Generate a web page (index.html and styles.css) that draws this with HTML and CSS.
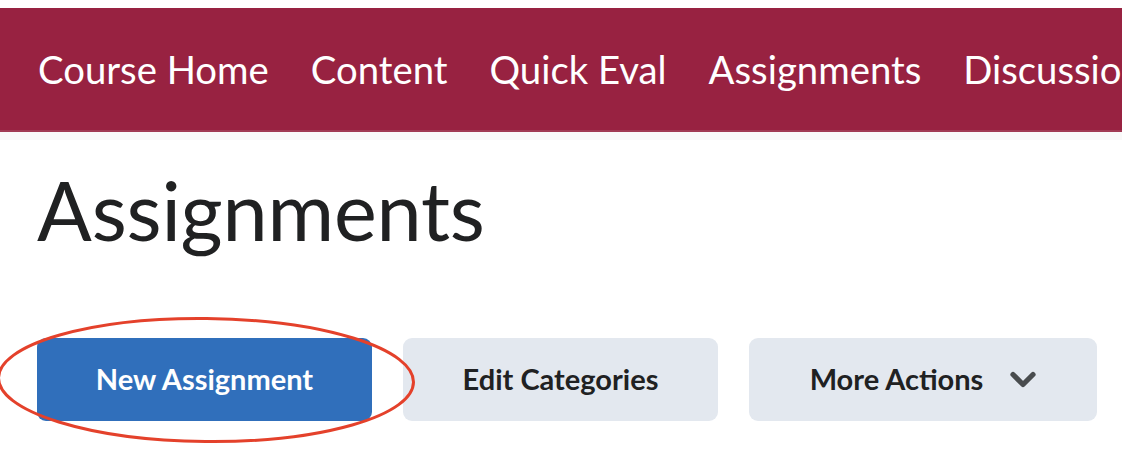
FILE: index.html
```html
<!DOCTYPE html>
<html lang="en">
<head>
<meta charset="utf-8">
<title>Assignments</title>
<link rel="stylesheet" href="styles.css">
</head>
<body>
<nav class="navbar">
  <a class="nav-link">Course Home</a>
  <a class="nav-link">Content</a>
  <a class="nav-link">Quick Eval</a>
  <a class="nav-link">Assignments</a>
  <a class="nav-link">Discussions</a>
</nav>
<div class="strip"></div>
<main class="page">
  <h1 class="title">Assignments</h1>
  <div class="actions">
    <div class="highlight-wrap">
      <button class="btn btn-primary">New Assignment</button>
      <svg class="ring" width="424" height="132" viewBox="0 0 424 132" aria-hidden="true">
        <ellipse cx="212" cy="66" rx="207.5" ry="61.5" fill="none" stroke="#e4412b" stroke-width="3" transform="rotate(0.6 212 66)"/>
      </svg>
    </div>
    <button class="btn btn-secondary">Edit Categories</button>
    <button class="btn btn-secondary btn-more">More Actions
      <svg class="chev" width="26" height="18" viewBox="0 0 26 18" aria-hidden="true">
        <path d="M3 3.5 L13 13.5 L23 3.5" fill="none" stroke="#494c4e" stroke-width="5.2" stroke-linecap="round" stroke-linejoin="round"/>
      </svg>
    </button>
  </div>
</main>
</body>
</html>
```
FILE: styles.css
```css
html, body {
  margin: 0;
  padding: 0;
  background: #ffffff;
  overflow: hidden;
}
body {
  font-family: Lato, "Open Sans", "Liberation Sans", sans-serif;
  padding-top: 8px;
  width: 1122px;
  height: 452px;
  box-sizing: border-box;
}
.navbar {
  display: flex;
  align-items: center;
  gap: 42px;
  height: 122px;
  padding-left: 38px;
  background: #982241;
  border-bottom: 2px solid #a13a54;
  white-space: nowrap;
  overflow: hidden;
}
.nav-link {
  color: #ffffff;
  font-size: 38.3px;
  line-height: 1.2;
  flex: none;
  padding-top: 1px;
}
.strip {
  height: 8px;
  background: #f9f9f9;
}
.page {
  padding-left: 37px;
}
.title {
  margin: 21px 0 0 0;
  font-size: 81px;
  font-weight: 400;
  line-height: 1.2;
  color: #202122;
  letter-spacing: -0.2px;
}
.actions {
  display: flex;
  align-items: center;
  gap: 31px;
  margin-top: 80px;
}
.highlight-wrap {
  position: relative;
  display: flex;
}
.btn {
  height: 83px;
  border: none;
  border-radius: 9px;
  padding: 0 40px;
  font-family: Lato, "Open Sans", "Liberation Sans", sans-serif;
  font-size: 29px;
  font-weight: 700;
  line-height: 1.2;
  display: flex;
  align-items: center;
  white-space: nowrap;
}
.btn-primary {
  background: #306fbb;
  color: #ffffff;
  width: 335px;
  justify-content: center;
}
.btn-secondary {
  background: #e3e8ef;
  color: #202122;
  width: 315px;
  justify-content: center;
}
.btn-more {
  width: 348px;
  gap: 27px;
}
.chev {
  display: block;
}
.ring {
  position: absolute;
  left: -43px;
  top: -24px;
  pointer-events: none;
}
```
